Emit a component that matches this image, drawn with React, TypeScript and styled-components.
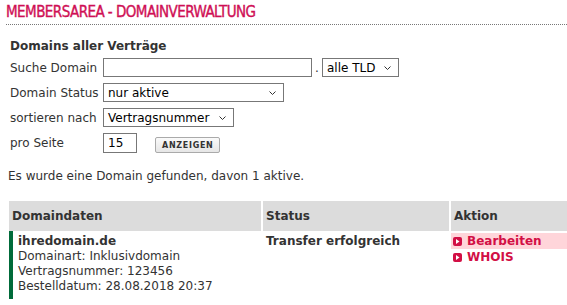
import React from "react";
import styled, { createGlobalStyle } from "styled-components";

const Global = createGlobalStyle`
  html, body { margin: 0; padding: 0; background: #fff; overflow: hidden; }
  body { font-family: "DejaVu Sans", Verdana, sans-serif; font-size: 12px; color: #333; }
`;

const Page = styled.div`
  width: 567px;
  height: 305px;
  overflow: hidden;
`;

const Title = styled.h1`
  margin: 0 0 0 6px;
  padding: 4px 0 3px 0;
  font-family: "DejaVu Sans Condensed", "DejaVu Sans", sans-serif;
  font-weight: normal;
  font-size: 15px;
  line-height: 17px;
  letter-spacing: -0.55px;
  color: #cf0f55;
  -webkit-text-stroke: 0.35px #cf0f55;
  border-bottom: 1px dotted #777;
`;

const Form = styled.div`
  padding: 14px 0 0 10px;
`;

const FormHead = styled.div`
  font-weight: bold;
  font-size: 12px;
  line-height: 15px;
  margin-bottom: 4px;
`;

const Grid = styled.div`
  display: grid;
  grid-template-columns: 93px auto;
  row-gap: 6px;
  align-items: center;
  justify-items: start;
`;

const Label = styled.span`
  font-size: 12px;
`;

const Field = styled.div`
  display: flex;
  align-items: center;
`;

const TextInput = styled.input<{ $w: number; $h?: number }>`
  box-sizing: border-box;
  width: ${(p) => p.$w}px;
  height: ${(p) => p.$h ?? 19}px;
  border: 1px solid #777;
  padding: 0 4px;
  margin: 0;
  font-family: "DejaVu Sans", sans-serif;
  font-size: 12px;
  color: #000;
  background: #fff;
`;

const Dot = styled.span`
  width: 10px;
  text-align: center;
`;

const Select = styled.div<{ $w: number }>`
  box-sizing: border-box;
  width: ${(p) => p.$w}px;
  height: 19px;
  border: 1px solid #777;
  padding: 0 7px 0 4px;
  display: flex;
  align-items: center;
  justify-content: space-between;
  font-size: 12px;
  color: #000;
  background: #fff;
`;

const Chevron = () => (
  <svg width="7" height="4" viewBox="0 0 7 4">
    <path d="M0.5 0.5 L3.5 3.5 L6.5 0.5" fill="none" stroke="#333" strokeWidth="1" />
  </svg>
);

const Button = styled.button`
  margin-left: 18px;
  height: 16px;
  padding: 0 6px;
  border: 1px solid #aaa;
  border-radius: 2px;
  background: linear-gradient(#fafafa, #e6e6e6);
  font-family: "DejaVu Sans", sans-serif;
  font-weight: bold;
  font-size: 8px;
  letter-spacing: 0.7px;
  color: #333;
  align-self: flex-end;
`;

const Info = styled.p`
  margin: 16px 0 0 8px;
  font-size: 12px;
  line-height: 15px;
`;

const Table = styled.div`
  margin: 17px 0 0 9px;
  width: 580px;
  display: grid;
  grid-template-columns: 252px 186px 130px;
  column-gap: 2px;
`;

const Th = styled.div`
  background: #dcdcdc;
  height: 30px;
  display: flex;
  align-items: center;
  padding-left: 3px;
  font-weight: bold;
  font-size: 12px;
`;

const Td = styled.div<{ $accent?: boolean }>`
  padding: 3px 0 5px ${(p) => (p.$accent ? 5 : 3)}px;
  border-left: ${(p) => (p.$accent ? "4px solid #006b3a" : "none")};
  font-size: 12px;
  line-height: 15px;
`;

const Strong = styled.div`
  font-weight: bold;
`;

const ActionCell = styled.div`
  padding-top: 2px;
  display: flex;
  flex-direction: column;
`;

const Action = styled.a<{ $hl?: boolean }>`
  display: flex;
  align-items: center;
  gap: 5px;
  padding-left: 2px;
  height: 16px;
  background: ${(p) => (p.$hl ? "#ffd5da" : "transparent")};
  color: #d20f45;
  font-weight: bold;
  font-size: 12px;
  text-decoration: none;
`;

const Arrow = () => (
  <svg width="9" height="9" viewBox="0 0 9 9">
    <rect x="0" y="0" width="9" height="9" rx="2" fill="#d20f45" />
    <path d="M3 2 L6.5 4.5 L3 7 Z" fill="#fff" />
  </svg>
);

export default function App() {
  return (
    <Page>
      <Global />
      <Title>MEMBERSAREA - DOMAINVERWALTUNG</Title>
      <Form>
        <FormHead>Domains aller Verträge</FormHead>
        <Grid>
          <Label>Suche Domain</Label>
          <Field>
            <TextInput $w={209} />
            <Dot>.</Dot>
            <Select $w={77}>
              alle TLD <Chevron />
            </Select>
          </Field>
          <Label>Domain Status</Label>
          <Select $w={181}>
            nur aktive <Chevron />
          </Select>
          <Label>sortieren nach</Label>
          <Select $w={131}>
            Vertragsnummer <Chevron />
          </Select>
          <Label>pro Seite</Label>
          <Field>
            <TextInput $w={34} $h={20} defaultValue="15" />
            <Button>ANZEIGEN</Button>
          </Field>
        </Grid>
      </Form>
      <Info>Es wurde eine Domain gefunden, davon 1 aktive.</Info>
      <Table>
        <Th>Domaindaten</Th>
        <Th>Status</Th>
        <Th>Aktion</Th>
        <Td $accent>
          <Strong>ihredomain.de</Strong>
          <div>Domainart: Inklusivdomain</div>
          <div>Vertragsnummer: 123456</div>
          <div>Bestelldatum: 28.08.2018 20:37</div>
        </Td>
        <Td>
          <Strong>Transfer erfolgreich</Strong>
        </Td>
        <ActionCell>
          <Action $hl href="#">
            <Arrow />
            Bearbeiten
          </Action>
          <Action href="#">
            <Arrow />
            WHOIS
          </Action>
        </ActionCell>
      </Table>
    </Page>
  );
}
